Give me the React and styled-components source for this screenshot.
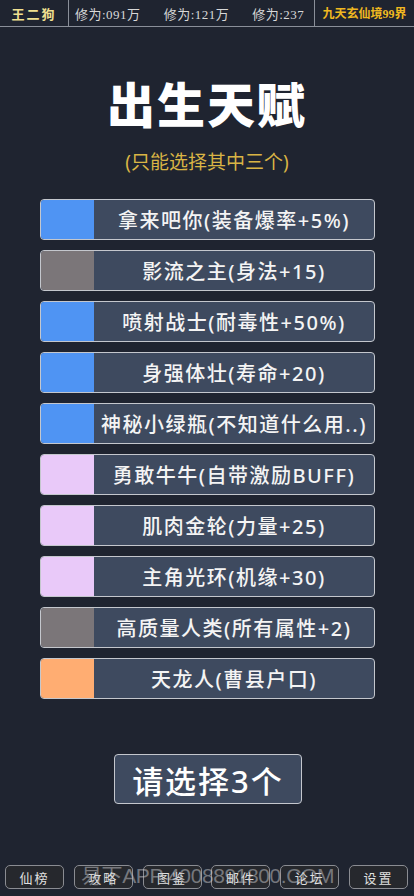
import styled, { createGlobalStyle } from "styled-components";

const GlobalStyle = createGlobalStyle`
  html, body {
    margin: 0;
    padding: 0;
    background: #1f2430;
  }
  * {
    box-sizing: border-box;
  }
`;

const sans = `"Noto Sans", "Noto Sans CJK SC", sans-serif`;
const serif = `"Liberation Serif", "Noto Sans CJK SC", serif`;

const Page = styled.div`
  position: relative;
  width: 414px;
  height: 896px;
  background: #1f2430;
  display: flex;
  flex-direction: column;
  font-family: ${sans};
  overflow: hidden;
`;

const TopBar = styled.div`
  height: 27px;
  display: flex;
  align-items: stretch;
  border-bottom: 1px solid #8a8f99;
  font-family: ${serif};
  font-size: 13px;
`;

const NameCell = styled.div`
  width: 69px;
  display: flex;
  align-items: center;
  justify-content: center;
  color: #f0e090;
  font-weight: bold;
  letter-spacing: 2px;
  border-right: 1px solid #8a8f99;
`;

const StatsCell = styled.div`
  flex: 1;
  display: flex;
  align-items: center;
  gap: 23px;
  padding-left: 6px;
  color: #d8d8d8;
  letter-spacing: 0.5px;
  border-right: 1px solid #8a8f99;
`;

const RealmCell = styled.div`
  width: 99px;
  display: flex;
  align-items: center;
  justify-content: center;
  color: #f0b820;
  font-weight: bold;
  font-size: 12px;
`;

const Title = styled.h1`
  margin: 48px 0 0;
  text-align: center;
  color: #ffffff;
  font-size: 48px;
  font-weight: 900;
  line-height: 60px;
  letter-spacing: 2px;
`;

const Subtitle = styled.div`
  margin-top: 14px;
  text-align: center;
  color: #d9b445;
  font-size: 19px;
  line-height: 26px;
`;

const List = styled.div`
  margin-top: 24px;
  display: flex;
  flex-direction: column;
  gap: 10px;
  padding: 0 39px 0 40px;
`;

const Row = styled.div`
  height: 41px;
  display: flex;
  border: 1px solid #c4c7cd;
  border-radius: 4px;
  background: #3e4a5f;
  overflow: hidden;
`;

const Swatch = styled.div`
  width: 53px;
  background: ${(p) => p.$color};
`;

const RowLabel = styled.div`
  flex: 1;
  display: flex;
  align-items: center;
  justify-content: center;
  color: #f4f4f4;
  font-size: 20px;
  font-weight: 500;
  letter-spacing: 1.5px;
`;

const ConfirmWrap = styled.div`
  margin-top: 55px;
  display: flex;
  justify-content: center;
`;

const ConfirmButton = styled.button`
  width: 188px;
  height: 50px;
  margin-left: 2px;
  border: 1px solid #c4c7cd;
  border-radius: 4px;
  background: #3e4a5f;
  color: #ffffff;
  font-family: ${sans};
  font-size: 31px;
  font-weight: 500;
  letter-spacing: 2px;
`;

const BottomBar = styled.div`
  margin-top: auto;
  margin-bottom: 7px;
  display: flex;
  justify-content: space-between;
  padding: 0 6px 0 5px;
`;

const NavButton = styled.div`
  width: 59px;
  height: 24px;
  border: 1px solid #8a8c92;
  border-radius: 5px;
  background: #26282d;
  color: #e0e0e0;
  font-family: ${serif};
  font-size: 13px;
  display: flex;
  align-items: center;
  justify-content: center;
  letter-spacing: 2px;
`;

const Watermark = styled.div`
  position: absolute;
  left: 81px;
  bottom: 7px;
  color: rgba(200, 200, 205, 0.5);
  font-family: "Liberation Sans", "Noto Sans CJK SC", sans-serif;
  font-size: 21px;
  letter-spacing: -0.4px;
  white-space: nowrap;
  pointer-events: none;
`;

const talents = [
  { color: "#4f94f3", text: "拿来吧你(装备爆率+5%)" },
  { color: "#7b7679", text: "影流之主(身法+15)" },
  { color: "#4f94f3", text: "喷射战士(耐毒性+50%)" },
  { color: "#4f94f3", text: "身强体壮(寿命+20)" },
  { color: "#4f94f3", text: "神秘小绿瓶(不知道什么用..)" },
  { color: "#e9c9f9", text: "勇敢牛牛(自带激励BUFF)" },
  { color: "#e9c9f9", text: "肌肉金轮(力量+25)" },
  { color: "#e9c9f9", text: "主角光环(机缘+30)" },
  { color: "#7b7679", text: "高质量人类(所有属性+2)" },
  { color: "#ffad72", text: "天龙人(曹县户口)" },
];

const navItems = ["仙榜", "攻略", "图鉴", "邮件", "论坛", "设置"];

export default function App() {
  return (
    <>
      <GlobalStyle />
      <Page>
        <TopBar>
          <NameCell>王二狗</NameCell>
          <StatsCell>
            <span>修为:091万</span>
            <span>修为:121万</span>
            <span>修为:237</span>
          </StatsCell>
          <RealmCell>九天玄仙境99界</RealmCell>
        </TopBar>
        <Title>出生天赋</Title>
        <Subtitle>(只能选择其中三个)</Subtitle>
        <List>
          {talents.map((t) => (
            <Row key={t.text}>
              <Swatch $color={t.color} />
              <RowLabel>{t.text}</RowLabel>
            </Row>
          ))}
        </List>
        <ConfirmWrap>
          <ConfirmButton>请选择3个</ConfirmButton>
        </ConfirmWrap>
        <BottomBar>
          {navItems.map((n) => (
            <NavButton key={n}>{n}</NavButton>
          ))}
        </BottomBar>
        <Watermark>易下APP 4008891800.COM</Watermark>
      </Page>
    </>
  );
}
